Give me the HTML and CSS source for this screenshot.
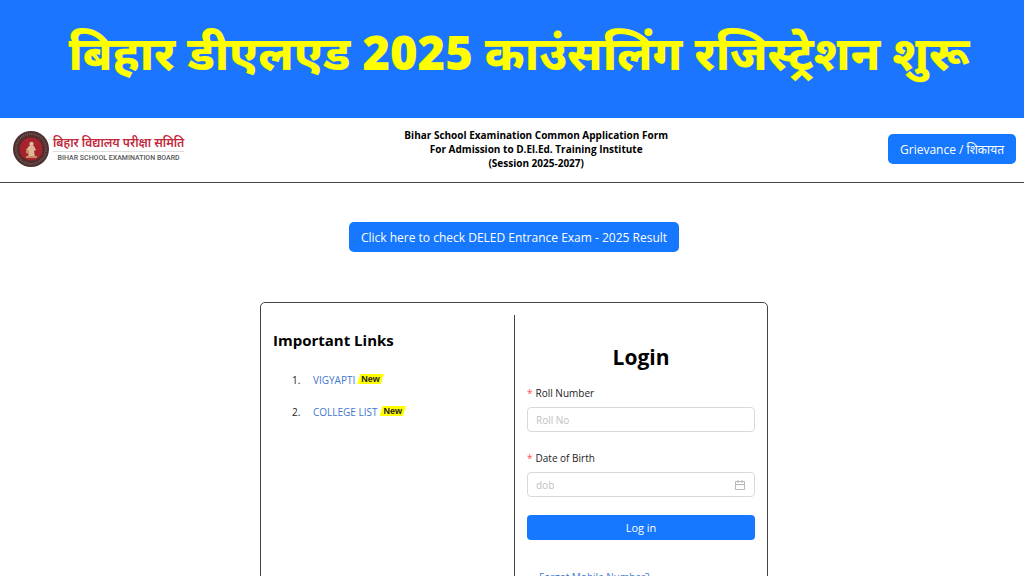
FILE: index.html
```html
<!DOCTYPE html>
<html lang="en">
  <head>
    <meta charset="UTF-8" />
    <meta name="viewport" content="width=device-width, initial-scale=1.0" />
    <title>Bihar School Examination Board - D.El.Ed. Login</title>
    <link rel="stylesheet" href="styles.css">
  </head>
  <body>
    <div class="banner" lang="hi">बिहार डीएलएड 2025 काउंसलिंग रजिस्ट्रेशन शुरू</div>

    <header>
      <div class="brand">
        <svg class="brand-logo" viewBox="0 0 36 36" aria-hidden="true">
          <circle cx="18" cy="18" r="18" fill="#4a3030" />
          <circle cx="18" cy="18" r="15" fill="none" stroke="#80554f" stroke-width="2" stroke-dasharray="1 1" />
          <circle cx="18" cy="18" r="12" fill="#a5232d" stroke="#6b2328" />
          <circle cx="18.500" cy="13" r="2.200" fill="#e5b7a0" />
          <path d="M16 15h5l2 4-2 1 1 6h-7l1-6-3-1z" fill="#e0b596" />
          <path d="M13 19l3 1v3l-3-1zM13 25h11v2H13z" fill="#c58c68" />
        </svg>
        <div class="brand-text">
          <div class="brand-hindi" lang="hi">बिहार विद्यालय परीक्षा समिति</div>
          <div class="brand-english">BIHAR SCHOOL EXAMINATION BOARD</div>
        </div>
      </div>
      <h1>
        Bihar School Examination Common Application Form<br />
        For Admission to D.El.Ed. Training Institute<br />
        (Session 2025-2027)
      </h1>
      <button type="button" class="button">Grievance / <span lang="hi">शिकायत</span></button>
    </header>

    <main>
      <button type="button" class="button">Click here to check DELED Entrance Exam - 2025 Result</button>

      <div class="card">
        <section class="links">
          <h2>Important Links</h2>
          <ol>
            <li><a href="#">VIGYAPTI</a><span class="new-tag">New</span></li>
            <li><a href="#">COLLEGE LIST</a><span class="new-tag">New</span></li>
          </ol>
        </section>

        <section class="login">
          <h2>Login</h2>
          <form>
            <div class="field">
              <label for="rollNumber"><span class="required">*</span>Roll Number</label>
              <div class="input-box">
                <input type="text" id="rollNumber" placeholder="Roll No" />
              </div>
            </div>
            <div class="field">
              <label for="dob"><span class="required">*</span>Date of Birth</label>
              <div class="input-box">
                <input type="text" id="dob" placeholder="dob" />
                <svg class="calendar" viewBox="0 0 12 12" aria-hidden="true">
                  <path d="M1.500 2.500h9v8h-9zM1.500 5.500h9M4 1v3M8 1v3" fill="none" stroke="#b8b8b8" />
                </svg>
              </div>
            </div>
            <button type="submit" class="button login-button">Log in</button>
          </form>
          <a class="forgot" href="#">Forgot Mobile Number?</a>
        </section>
      </div>
    </main>
  </body>
</html>
```
FILE: styles.css
```css
* {
  box-sizing: border-box;
}

body,
h1,
h2,
ol {
  margin: 0;
  padding: 0;
}

body {
  font-family: "Open Sans", "Noto Sans", sans-serif;
  font-size: 10px;
  line-height: 16px;
  background-color: #fff;
  color: #222;
}

a {
  color: #3f78cf;
  text-decoration: none;
}

.banner {
  height: 118px;
  padding: 14px 0 0 14px;
  background-color: #1c75ff;
  color: #ff0;
  font-size: 47px;
  font-weight: 800;
  line-height: 76px;
  text-align: center;
  white-space: nowrap;
}

header {
  display: flex;
  justify-content: space-between;
  align-items: center;
  height: 65px;
  padding: 0 8px 2px 13px;
  border-bottom: 1px solid #444;
}

header h1 {
  color: #000;
  font-size: 10px;
  font-weight: 700;
  line-height: 14px;
  text-align: center;
}

.brand {
  display: flex;
  align-items: center;
  gap: 4px;
}

.brand-logo {
  width: 36px;
  height: 36px;
}

.brand-text {
  text-align: center;
  white-space: nowrap;
}

.brand-hindi {
  border-bottom: 1px solid #ddd;
  color: #c3273b;
  font-size: 12px;
  font-weight: 600;
  line-height: 16px;
}

.brand-english {
  color: #555;
  font-family: Roboto, sans-serif;
  font-size: 7px;
  font-weight: 500;
  line-height: 12px;
}

.button {
  height: 30px;
  padding: 0 12px;
  border: none;
  border-radius: 5px;
  background-color: #1677ff;
  color: #fff;
  font-family: inherit;
  font-size: 12px;
  cursor: pointer;
}

.button:hover {
  background-color: #4096ff;
}

main {
  display: flex;
  flex-direction: column;
  align-items: center;
  gap: 50px;
  padding: 39px 20px 0 24px;
}

.card {
  display: grid;
  grid-template-columns: 1fr 1fr;
  width: 100%;
  max-width: 508px;
  padding: 12px 0;
  border: 1px solid #444;
  border-radius: 5px;
}

.card h2 {
  color: #000;
  font-weight: 700;
}

.links {
  padding: 12px;
}

.links h2 {
  font-size: 15px;
  line-height: 26px;
}

.links ol {
  margin-top: 19px;
  padding-left: 30px;
}

.links li {
  margin-bottom: 16px;
  padding-left: 10px;
}

.new-tag {
  display: inline-block;
  margin-left: 2px;
  padding: 0 4px;
  background-color: #ff0;
  clip-path: polygon(3px 0, 100% 0, calc(100% - 3px) 100%, 0 100%);
  color: #222;
  font-family: "Liberation Sans", sans-serif;
  font-size: 9px;
  font-weight: 700;
  line-height: 10px;
  vertical-align: 2px;
}

.login {
  padding: 24px 12px;
  border-left: 1px solid #444;
}

.login h2 {
  margin-bottom: 10px;
  font-size: 21px;
  line-height: 36px;
  text-align: center;
}

.field {
  margin-bottom: 18px;
}

.field label {
  display: block;
  margin-bottom: 6px;
}

.required {
  margin-right: 3px;
  color: #ff4d4f;
}

.input-box {
  display: flex;
  align-items: center;
  height: 25px;
  padding: 0 8px;
  border: 1px solid #d9d9d9;
  border-radius: 4px;
}

.input-box input {
  flex: 1;
  min-width: 0;
  padding: 0;
  border: none;
  outline: none;
  color: inherit;
  font: inherit;
}

.input-box input::placeholder {
  color: #bfbfbf;
}

.calendar {
  width: 12px;
  height: 12px;
}

.login-button {
  width: 100%;
  height: 25px;
  border-radius: 4px;
  font-size: 11px;
}

.forgot {
  display: inline-block;
  margin: 29px 12px 0;
}
```
